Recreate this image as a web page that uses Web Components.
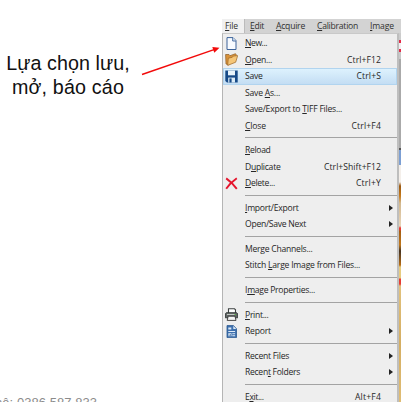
<!DOCTYPE html>
<html lang="vi"><head><meta charset="utf-8"><title>File menu</title>
<style>html,body{margin:0;width:411px;height:402px;overflow:hidden;background:#fff}</style></head>
<body><slide-page></slide-page>
<script>
const define=(name,cls)=>customElements.define(name,cls);

// Text run whose letter spacing is adjusted to fill the width in "w".
define('fit-text',class extends HTMLElement{
  connectedCallback(){
    if(this.shadowRoot)return;
    this.attachShadow({mode:'open'}).innerHTML='<style>:host{display:inline-block;white-space:nowrap}span{display:inline-block;white-space:nowrap}</style><span><slot></slot></span>';
    const w=+this.getAttribute('w'),s=this.shadowRoot.querySelector('span');
    if(w){const n=this.textContent.length;s.style.letterSpacing=(w-s.getBoundingClientRect().width)/n+'px'}
  }
});

const icons={
 new:'<path d="M2 .6h6l3 3v8.900H2z" fill="#f8fbff" stroke="#3c6399" stroke-width="1"/><path d="M7.7 .6v3.400H11" fill="#dce9f7" stroke="#3c6399" stroke-width=".9"/>',
 open:'<path d="M.6 1.500l3.400 0 1 1.200 5.500-2 .7 1v2.300l-7.500 8-2.700-1z" fill="#d99239" stroke="#8b5b25" stroke-width=".7"/><path d="M3.3 5.200l4-.9 1-1.200 4.400-.5-2 6.600-8 3.200z" fill="#f5c678" stroke="#9b6527" stroke-width=".7"/>',
 save:'<path d="M.3.500h12.400v12H2L.3 11z" fill="#174a87"/><path d="M3 .5h7v4.800H3z" fill="#e9f4fb"/><path d="M3.200 7.600h6.800v4.900H3.200z" fill="#dcecf7"/><path d="M4.400 8.400h2.200v4.100H4.400z" fill="#174a87"/>',
 del:'<path d="M1.200 1.400C5 4 8.500 7.500 11.800 11.800M11.800 1.200C7 4.500 4 7.500 1.200 11.800" fill="none" stroke="#e5152d" stroke-width="1.9"/>',
 print:'<path d="M3.5 5V.8h6l1 1V5" fill="#fff" stroke="#3d4242" stroke-width="1.1"/><path d="M1.300 4.700h10.400l1 1.300v3.800H.4V6z" fill="#636867" stroke="#303534" stroke-width=".9"/><path d="M2 6.500h9" stroke="#c3c8c5"/><path d="M3.200 8.200h6.800l1 4.200H2.200z" fill="#f5f5f5" stroke="#333" stroke-width=".9"/><path d="M9.500 6.500h1.500" stroke="#58a548"/>',
 report:'<path d="M2 .6h6.500L11.500 3.800v8.800H2z" fill="#3e70ae" stroke="#29588f" stroke-width=".8"/><path d="M8.300 .8v3.200h3" fill="#dbe9f7"/><path d="M3.300 2.500h3v2h-3zM3.300 6h6.800v1H3.300zM3.300 8.300h3.200v3H3.300zM7.300 8.300h2.800v1H7.300zM7.300 10.300h2.800v1H7.300z" fill="#dfebf7"/><path d="M4.200 11.300V9.500M5.500 11.300V9" stroke="#29588f" stroke-width=".6"/>'
};
define('menu-icon',class extends HTMLElement{
  connectedCallback(){
    this.attachShadow({mode:'open'}).innerHTML='<style>:host{display:block;width:13px;height:13px}svg{display:block}</style><svg width="13" height="13" viewBox="0 0 13 13">'+(icons[this.getAttribute('name')]||'')+'</svg>';
  }
});

define('menu-item',class extends HTMLElement{
  connectedCallback(){
    const a=n=>this.getAttribute(n);
    this.attachShadow({mode:'open'}).innerHTML=`<style>
    :host{display:grid;grid-template-columns:21px 1fr auto 16px;height:16.44px;align-items:center;box-sizing:border-box;padding-left:1px;font:8.6px/16px "Open Sans","Noto Sans",sans-serif;color:#262626}
    :host([selected]){background:linear-gradient(#dff3fe,#c2dcf3);box-shadow:inset 0 0 0 1px #b1d4ef}
    menu-icon{margin-left:1px}.end{width:16px}
    .arrow{display:block;margin-left:8px;width:0;height:0;border:3.5px solid transparent;border-left:4px solid #222;border-right:0}
    </style><menu-icon name="${a('icon')||''}"></menu-icon><slot></slot><fit-text w="${a('kw')||''}">${a('key')||''}</fit-text><span class="end">${this.hasAttribute('sub')?'<i class="arrow"></i>':''}</span>`;
  }
});
define('menu-rule',class extends HTMLElement{
  connectedCallback(){this.attachShadow({mode:'open'}).innerHTML='<style>:host{display:flex;height:8.22px;align-items:center;padding-left:22px}i{height:1px;width:100%;background:#a3a3a3}</style><i></i>'}
});
define('menu-bar',class extends HTMLElement{
  connectedCallback(){this.attachShadow({mode:'open'}).innerHTML=`<style>
  :host{display:flex;height:14px;background:#d3d3d3;font:8.6px/14px "Open Sans","Noto Sans",sans-serif;color:#303030}
  span{box-sizing:border-box;padding-left:5px;flex:none}.file{width:23px;padding-left:3px;background:#f0f0f0;border-right:1px solid #bbb}</style>
  <span class="file"><fit-text w="13"><u>F</u>ile</fit-text></span><span style="width:26px"><fit-text w="14"><u>E</u>dit</fit-text></span><span style="width:41px"><fit-text w="29"><u>A</u>cquire</fit-text></span><span style="width:53px"><fit-text w="41"><u>C</u>alibration</fit-text></span><span><fit-text w="24"><u>I</u>mage</fit-text></span>`}
});
define('file-menu',class extends HTMLElement{
  connectedCallback(){this.attachShadow({mode:'open'}).innerHTML=`<style>
  :host{display:block;box-sizing:border-box;width:177px;height:369px;overflow:hidden;background:#eee;border-left:1px solid #b5b5b5;border-right:2px solid #bebebe;padding-top:1.200px;border-top:1px solid #c9c9c9}</style>
  <menu-item icon="new"><fit-text w="22"><u>N</u>ew...</fit-text></menu-item>
  <menu-item icon="open" key="Ctrl+F12" kw="34"><fit-text w="27"><u>O</u>pen...</fit-text></menu-item>
  <menu-item selected icon="save" key="Ctrl+S" kw="24.500"><fit-text w="17.500">Save</fit-text></menu-item>
  <menu-item><fit-text w="35">Save <u>A</u>s...</fit-text></menu-item>
  <menu-item><fit-text w="97">Save/Export to <u>T</u>IFF Files...</fit-text></menu-item>
  <menu-item key="Ctrl+F4" kw="29.500"><fit-text w="21"><u>C</u>lose</fit-text></menu-item>
  <menu-rule></menu-rule>
  <menu-item><fit-text w="25.500"><u>R</u>eload</fit-text></menu-item>
  <menu-item key="Ctrl+Shift+F12" kw="57"><fit-text w="35.500">D<u>u</u>plicate</fit-text></menu-item>
  <menu-item icon="del" key="Ctrl+Y" kw="25"><fit-text w="30"><u>D</u>elete...</fit-text></menu-item>
  <menu-rule></menu-rule>
  <menu-item sub><fit-text w="53.500"><u>I</u>mport/Export</fit-text></menu-item>
  <menu-item sub><fit-text w="61">Open/Save Next</fit-text></menu-item>
  <menu-rule></menu-rule>
  <menu-item><fit-text w="67.500">Merge Channels...</fit-text></menu-item>
  <menu-item><fit-text w="115">Stitch <u>L</u>arge Image from Files...</fit-text></menu-item>
  <menu-rule></menu-rule>
  <menu-item><fit-text w="70">I<u>m</u>age Properties...</fit-text></menu-item>
  <menu-rule></menu-rule>
  <menu-item icon="print"><fit-text w="23.500"><u>P</u>rint...</fit-text></menu-item>
  <menu-item icon="report" sub><fit-text w="26">Report</fit-text></menu-item>
  <menu-rule></menu-rule>
  <menu-item sub><fit-text w="44">Recent Files</fit-text></menu-item>
  <menu-item sub><fit-text w="55">Recen<u>t</u> Folders</fit-text></menu-item>
  <menu-rule></menu-rule>
  <menu-item key="Alt+F4" kw="26"><fit-text w="18.500">E<u>x</u>it...</fit-text></menu-item>`}
});
define('app-window',class extends HTMLElement{
  connectedCallback(){this.attachShadow({mode:'open'}).innerHTML=`<style>
  :host{display:block;width:179px;height:383px;overflow:hidden}.body{display:flex}
  .edge{width:2px;height:369px;background:linear-gradient(#ccc 0 7px,#e22b48 7px 10px,#f4f0f2 10px 16px,#e22b48 16px 19px,#c8c8c8 19px 26px,#aaa 26px 115px,#555 115px 117px,#7c9fd3 117px 132px,#f4efea 132px 149px,#9b5912 153px,#c67a1b 163px,#d2b88e 170px,#e9d6bb 193px,#e83a35 195px 197px,#a35d12 198px,#bf771c 212px,#453322 218px,#b76c15 232px,#e7cc80 234px 245px,#e63c34 246px 251px,#e2c27e 253px,#d5ae62 310px,#e0bd75)}</style>
  <menu-bar></menu-bar><div class="body"><file-menu></file-menu><i class="edge"></i></div>`}
});
define('slide-note',class extends HTMLElement{
  connectedCallback(){this.attachShadow({mode:'open'}).innerHTML=`<style>:host{display:flex;flex-direction:column;align-items:center;width:136px;color:#111;font:19.7px/24px "Liberation Sans",Arial,sans-serif}</style><fit-text w="123.500">Lựa chọn lưu,</fit-text><fit-text w="112">mở, báo cáo</fit-text>`}
});
define('slide-page',class extends HTMLElement{
  connectedCallback(){this.attachShadow({mode:'open'}).innerHTML=`<style>
  :host{display:grid;grid-template-columns:136px 86px 179px;width:411px;height:402px;overflow:hidden;background:#fff}
  .left{display:flex;flex-direction:column;justify-content:space-between;height:402px}
  slide-note{margin-top:51px}footer{height:7px;overflow:hidden;font:13px/15px "Liberation Sans",Arial,sans-serif;color:#8b8b8b;white-space:nowrap}
  footer span{display:block;margin-left:-5px}svg{display:block}app-window{margin-top:19px}</style>
  <div class="left"><slide-note></slide-note><footer><span><fit-text w="102">hệ: 0386 587 833</fit-text></span></footer></div>
  <svg width="86" height="402" viewBox="136 0 86 402"><path d="M142 74.500L214 49.700" stroke="#f20a0a" stroke-width="1.400"/><path d="M219.500 47.800L214.300 52.800 212.300 47.100z" fill="#f20a0a"/></svg>
  <app-window></app-window>`}
});
</script></body></html>
